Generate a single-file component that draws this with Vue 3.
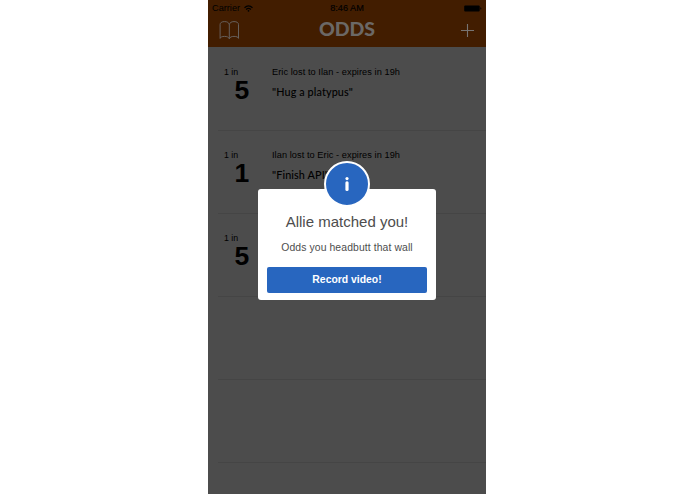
<script setup>
const challenges = [
  { odds: 5, title: 'Eric lost to Ilan - expires in 19h', dare: '"Hug a platypus"' },
  { odds: 1, title: 'Ilan lost to Eric - expires in 19h', dare: '"Finish API"' },
  { odds: 5, title: '', dare: '' },
  { odds: null },
  { odds: null },
]
</script>

<template>
  <div class="stage">
    <div class="phone">
      <header class="header">
        <div class="status">
          <div class="carrier">
            <span class="carrier-name">Carrier</span>
            <svg width="9" height="7" viewBox="0 0 9 7" fill="none" stroke="#000" stroke-width="1.3">
              <path d="M.5 2.7Q4.5 -.9 8.5 2.7M2.1 4.4Q4.5 2.3 6.9 4.4" />
              <circle cx="4.5" cy="5.8" r=".9" fill="#000" stroke="none" />
            </svg>
          </div>
          <span class="time">8:46 AM</span>
          <svg class="battery" width="19" height="7" viewBox="0 0 19 7">
            <rect x="1.2" y=".4" width="15.5" height="6.2" rx="1" />
            <path d="M17.3 2.2Q18.4 2.4 18.4 3.4T17.3 4.6Z" />
          </svg>
        </div>
        <div class="nav">
          <svg class="book" width="21" height="20" viewBox="0 0 21 20" fill="none" stroke="#6b6866" stroke-width=".9">
            <path d="M10.3 4.6C9.8 2.6 8.2 1.6 5.6 1.6C2.8 1.6 1.1 2.6 1.1 4.6V18.4C1.5 17.1 3 16.4 5.6 16.4C8.1 16.4 9.5 17.1 10.3 18.7C11.1 17.1 12.5 16.4 15 16.4C17.6 16.4 19.1 17.1 19.5 18.4V4.6C19.5 2.6 17.8 1.6 15 1.6C12.4 1.6 10.8 2.6 10.3 4.6V18.7" />
          </svg>
          <h1 class="brand">ODDS</h1>
          <svg class="plus" width="14" height="14" viewBox="0 0 14 14" stroke="#777472" stroke-width="1.1">
            <path d="M6.5 1V14M0 7.5H13" />
          </svg>
        </div>
      </header>
      <main>
        <section v-for="(item, i) in challenges" :key="i" class="row">
          <template v-if="item.odds">
            <div class="odds">
              <span class="one-in">1 in</span>
              <span class="number">{{ item.odds }}</span>
            </div>
            <div class="detail">
              <span class="title">{{ item.title }}</span>
              <span class="dare">{{ item.dare }}</span>
            </div>
          </template>
        </section>
      </main>
      <div class="dialog">
        <div class="badge">
          <svg width="8" height="16" viewBox="0 0 8 16" fill="#fff">
            <circle cx="4" cy="2.6" r="1.6" />
            <rect x="2.4" y="5.2" width="3.2" height="9.8" rx="1.5" />
          </svg>
        </div>
        <h2 class="heading">Allie matched you!</h2>
        <p class="message">Odds you headbutt that wall</p>
        <button class="action">Record video!</button>
      </div>
    </div>
  </div>
</template>

<style>
body { background: #fff; }
</style>

<style scoped>
.stage { display: flex; justify-content: center; height: 494px; padding-right: 1px; box-sizing: border-box; overflow: hidden; }
.phone { position: relative; width: 278px; height: 494px; overflow: hidden; background: #4c4c4c; color: #000; font-family: "Liberation Sans", Arial, sans-serif; }
.header { height: 47px; background: #421d00; box-sizing: border-box; }
.status { display: grid; grid-template-columns: 1fr auto 1fr; align-items: center; height: 15px; padding: 0 4px; font-size: 9.2px; line-height: 16px; }
.carrier { display: flex; align-items: center; gap: 4px; }
.carrier-name { font-size: 9.2px; }
.time { font-size: 9.2px; -webkit-text-stroke: 0.15px #000; }
.battery { justify-self: end; }
.nav { display: grid; grid-template-columns: 1fr auto 1fr; align-items: center; height: 30px; padding: 0 11px 0 11px; }
.brand { margin: 0 0 3px; color: #6b6866; font-family: Lato, sans-serif; font-size: 19.5px; font-weight: 900; line-height: 27px; }
.plus { justify-self: end; }
.row { display: flex; box-sizing: border-box; height: 83px; margin-left: 10px; padding: 18px 0 0 6px; border-bottom: 1px solid #454545; }
.row:first-child { height: 84px; padding-top: 19px; }
.odds { display: flex; flex-direction: column; width: 48px; }
.one-in { font-size: 8.8px; line-height: 12px; }
.number { padding-left: 10.5px; font-size: 26.5px; font-weight: 700; line-height: 25px; }
.detail { display: flex; flex-direction: column; white-space: nowrap; }
.title { font-size: 9.2px; line-height: 12px; letter-spacing: 0.07px; }
.dare { padding-top: 6px; font-family: Lato, sans-serif; font-size: 10.8px; font-weight: 500; line-height: 16px; letter-spacing: 0.12px; }
.dialog { position: absolute; left: 50px; top: 189px; width: 178px; height: 111px; padding: 22px 9px 0; box-sizing: border-box; border-radius: 3px; background: #fff; color: #4d4d4d; text-align: center; }
.badge { position: absolute; left: 66px; top: -28px; display: flex; align-items: center; justify-content: center; width: 46px; height: 46px; border: 2px solid #fff; border-radius: 50%; box-sizing: border-box; background: #2866bf; }
.heading { margin: 0; font-size: 15px; font-weight: 400; line-height: 22px; }
.message { margin: 7px 0 0; font-size: 10.4px; line-height: 16px; letter-spacing: 0.1px; }
.action { display: block; width: 160px; height: 26px; margin-top: 10.5px; padding: 0; border: 0; border-radius: 2px; background: #2866bf; color: #fff; font-family: inherit; font-size: 10.4px; font-weight: 700; line-height: 26px; }
</style>
